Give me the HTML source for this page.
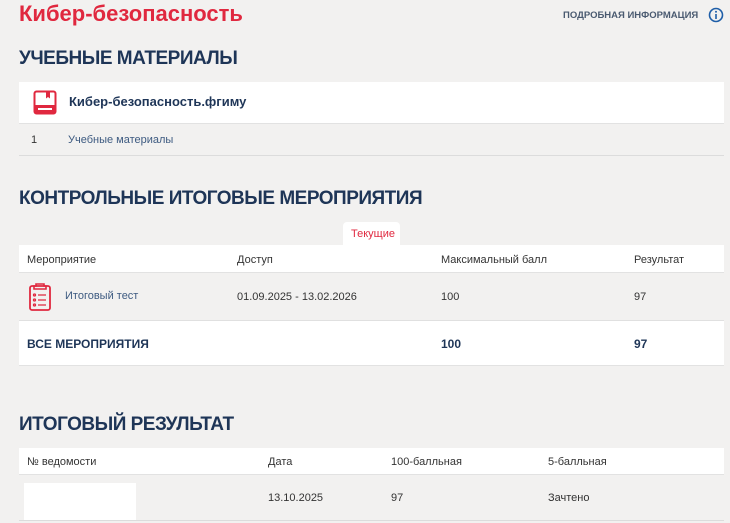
<!DOCTYPE html>
<html><head><meta charset="utf-8"><style>
*{margin:0;padding:0;box-sizing:border-box}
body{width:730px;height:523px;background:#f2f1f0;font-family:"Liberation Sans","Noto Sans CJK SC",sans-serif;position:relative;overflow:hidden;color:#333}
.a{position:absolute;white-space:nowrap}
.h{color:#1e3557;font-size:19px;font-weight:bold;letter-spacing:-0.5px}
.w{position:absolute;background:#fff}
.s{font-size:11px;color:#333}
.b{font-size:12px;font-weight:bold;color:#1e3557}
</style></head><body>
<div class="a" style="left:19px;top:1px;font-size:22px;font-weight:bold;color:#e0283f">Кибер-безопасность</div>
<div class="a" style="left:563px;top:10px;font-size:9.5px;font-weight:bold;color:#4a5a70">ПОДРОБНАЯ ИНФОРМАЦИЯ</div>
<svg class="a" style="left:708px;top:7px" width="16" height="16"><circle cx="8" cy="8" r="6.5" fill="none" stroke="#1e5ea8" stroke-width="1.6"/><rect x="7.2" y="7" width="1.6" height="5" fill="#1e5ea8"/><circle cx="8" cy="4.8" r="1" fill="#1e5ea8"/></svg>

<div class="a h" style="left:19px;top:48px">УЧЕБНЫЕ МАТЕРИАЛЫ</div>
<div class="w" style="left:19px;top:82px;width:705px;height:42px;border-bottom:1px solid #e2e2e2"></div>
<svg class="a" style="left:33px;top:90px" width="25" height="26"><rect x="1.5" y="1.5" width="21" height="22" rx="2" fill="none" stroke="#e0283f" stroke-width="2"/><rect x="1.5" y="15" width="21" height="8.5" fill="#e0283f"/><rect x="5" y="18" width="14" height="2" fill="#fff"/><path d="M13 1.5v7l2-1.5 2 1.5v-7z" fill="#e0283f"/></svg>
<div class="a" style="left:69px;top:94px;font-size:13px;font-weight:bold;color:#1e3557">Кибер-безопасность.фгиму</div>
<div class="a s" style="left:31px;top:134px">1</div>
<div class="a s" style="left:68px;top:134px;color:#3d5a80">Учебные материалы</div>
<div class="w" style="left:19px;top:155px;width:705px;height:1px;background:#dcdcdc"></div>

<div class="a h" style="left:19px;top:188px">КОНТРОЛЬНЫЕ ИТОГОВЫЕ МЕРОПРИЯТИЯ</div>
<div class="w" style="left:343px;top:222px;width:57px;height:24px;border-radius:4px 4px 0 0"></div>
<div class="a" style="left:351px;top:228px;font-size:11px;color:#e0283f">Текущие</div>
<div class="w" style="left:19px;top:245px;width:705px;height:28px;border-bottom:1px solid #e2e2e2"></div>
<div class="a s" style="left:27px;top:254px">Мероприятие</div>
<div class="a s" style="left:237px;top:254px">Доступ</div>
<div class="a s" style="left:441px;top:254px">Максимальный балл</div>
<div class="a s" style="left:634px;top:254px">Результат</div>
<svg class="a" style="left:28px;top:282px" width="26" height="30"><rect x="2" y="4" width="20" height="24" rx="2" fill="none" stroke="#e0283f" stroke-width="1.8"/><path d="M8 4V2h8v2h2v3H6V4z" fill="none" stroke="#e0283f" stroke-width="1.6"/><g fill="none" stroke="#e0283f" stroke-width="1.3"><circle cx="6.5" cy="13" r="1"/><circle cx="6.5" cy="18" r="1"/><circle cx="6.5" cy="23" r="1"/><path d="M10 13h8M10 18h8M10 23h8"/></g></svg>
<div class="a s" style="left:65px;top:290px;color:#3d5a80">Итоговый тест</div>
<div class="a s" style="left:237px;top:291px">01.09.2025 - 13.02.2026</div>
<div class="a s" style="left:441px;top:291px">100</div>
<div class="a s" style="left:634px;top:291px">97</div>
<div class="w" style="left:19px;top:320px;width:705px;height:46px;border-top:1px solid #e0e0e0;border-bottom:1px solid #e2e2e2"></div>
<div class="a b" style="left:27px;top:337px">ВСЕ МЕРОПРИЯТИЯ</div>
<div class="a b" style="left:441px;top:337px">100</div>
<div class="a b" style="left:634px;top:337px">97</div>

<div class="a h" style="left:19px;top:414px">ИТОГОВЫЙ РЕЗУЛЬТАТ</div>
<div class="w" style="left:19px;top:448px;width:705px;height:27px;border-bottom:1px solid #e2e2e2"></div>
<div class="a s" style="left:27px;top:456px">№ ведомости</div>
<div class="a s" style="left:268px;top:456px">Дата</div>
<div class="a s" style="left:391px;top:456px">100-балльная</div>
<div class="a s" style="left:548px;top:456px">5-балльная</div>
<div class="w" style="left:24px;top:483px;width:112px;height:37px"></div>
<div class="a s" style="left:268px;top:492px">13.10.2025</div>
<div class="a s" style="left:391px;top:492px">97</div>
<div class="a s" style="left:548px;top:492px">Зачтено</div>
<div class="w" style="left:19px;top:520px;width:705px;height:1px;background:#dcdcdc"></div>
</body></html>
